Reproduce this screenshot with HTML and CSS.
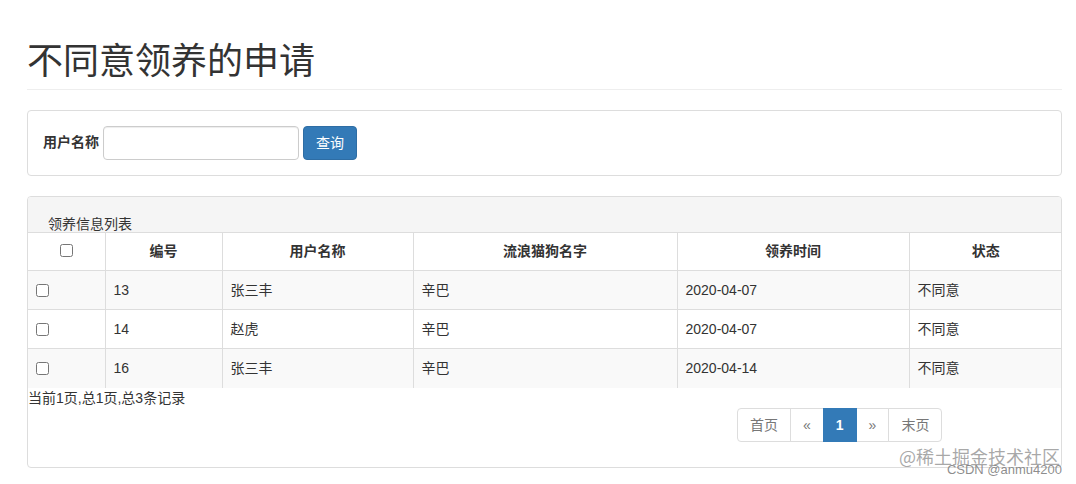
FILE: index.html
```html
<!DOCTYPE html>
<html lang="zh-CN">
<head>
<meta charset="utf-8">
<title>不同意领养的申请</title>
<link rel="stylesheet" href="styles.css">
</head>
<body>
<div class="page">
  <h1 class="page-header">不同意领养的申请</h1>

  <div class="panel">
    <div class="panel-body search">
      <label class="search-label">用户名称</label>
      <input class="search-input" type="text">
      <button class="btn-primary" type="button">查询</button>
    </div>
  </div>

  <div class="panel list-panel">
    <div class="panel-heading">领养信息列表</div>
    <table class="data-table">
      <colgroup>
        <col class="c-check"><col class="c-id"><col class="c-user"><col class="c-pet"><col class="c-time"><col class="c-state">
      </colgroup>
      <thead>
        <tr>
          <th><input class="cb" type="checkbox"></th>
          <th>编号</th>
          <th>用户名称</th>
          <th>流浪猫狗名字</th>
          <th>领养时间</th>
          <th>状态</th>
        </tr>
      </thead>
      <tbody>
        <tr class="odd">
          <td><input class="cb" type="checkbox"></td>
          <td>13</td><td>张三丰</td><td>辛巴</td><td>2020-04-07</td><td>不同意</td>
        </tr>
        <tr>
          <td><input class="cb" type="checkbox"></td>
          <td>14</td><td>赵虎</td><td>辛巴</td><td>2020-04-07</td><td>不同意</td>
        </tr>
        <tr class="odd">
          <td><input class="cb" type="checkbox"></td>
          <td>16</td><td>张三丰</td><td>辛巴</td><td>2020-04-14</td><td>不同意</td>
        </tr>
      </tbody>
    </table>
    <div class="page-info">当前1页,总1页,总3条记录</div>
    <ul class="pagination">
      <li class="disabled"><span>首页</span></li>
      <li class="disabled"><span>«</span></li>
      <li class="active"><span>1</span></li>
      <li class="disabled"><span>»</span></li>
      <li class="disabled"><span>末页</span></li>
    </ul>
  </div>

  <div class="watermark">
    <div class="wm-main">@稀土掘金技术社区</div>
    <div class="wm-sub">CSDN @anmu4200</div>
  </div>
</div>
</body>
</html>
```

FILE: styles.css
```css
* { box-sizing: border-box; }

html, body {
  margin: 0;
  padding: 0;
  background: #fff;
}

body {
  font-family: "Liberation Sans", Arial, "Noto Sans CJK SC", sans-serif;
  font-size: 14px;
  line-height: 20px;
  color: #333;
}

.page {
  position: relative;
  padding: 38px 14px 0 27px;
  height: 484px;
  overflow: hidden;
}

.page-header {
  margin: 0 0 20px;
  padding-bottom: 11px;
  font-size: 36px;
  line-height: 40px;
  font-weight: 400;
  color: #333;
  border-bottom: 1px solid #eee;
  font-family: "Noto Sans CJK SC", "Liberation Sans", sans-serif;
}

.panel {
  border: 1px solid #ddd;
  border-radius: 4px;
  background: #fff;
  margin-bottom: 20px;
  overflow: hidden;
}

.panel-body {
  padding: 15px;
}

.search {
  display: flex;
  align-items: center;
}

.search-label {
  font-weight: 700;
  margin-right: 4px;
  margin-top: -3px;
}

.search-input {
  width: 196px;
  height: 34px;
  border: 1px solid #ccc;
  border-radius: 4px;
  box-shadow: inset 0 1px 1px rgba(0,0,0,.075);
  padding: 6px 12px;
  font: inherit;
  margin: 0 4px 0 0;
}

.btn-primary {
  width: 54px;
  height: 34px;
  border: 1px solid #2e6da4;
  border-radius: 4px;
  background: #337ab7;
  color: #fff;
  font: inherit;
  font-family: "Liberation Sans", "Noto Sans CJK SC", sans-serif;
  padding: 0;
  margin: 0;
}

.panel-heading {
  background: #f5f5f5;
  height: 35px;
  padding: 19px 0 0 20px;
  line-height: 16px;
  font-size: 14px;
}

.data-table {
  width: 100%;
  border-collapse: collapse;
  table-layout: fixed;
}

.c-check { width: 77px; }
.c-id { width: 117px; }
.c-user { width: 191px; }
.c-pet { width: 264px; }
.c-time { width: 232px; }
.c-state { width: 153px; }

.data-table th,
.data-table td {
  border-top: 1px solid #ddd;
  border-left: 1px solid #ddd;
  padding: 8px;
  line-height: 22px;
  vertical-align: middle;
  text-align: left;
}

.data-table td {
  height: 39px;
}

.data-table th {
  line-height: 21px;
  text-align: center;
  font-weight: 700;
  background: #fff;
}

.data-table th:first-child,
.data-table td:first-child {
  border-left: none;
}

.data-table tr.odd td {
  background: #f9f9f9;
}

.cb {
  width: 13px;
  height: 13px;
  margin: 0;
  vertical-align: middle;
  display: block;
}

.data-table th .cb {
  margin: -2px auto 0;
}

.page-info {
  line-height: 20px;
  padding-left: 0;
}

.pagination {
  display: flex;
  list-style: none;
  margin: 0 0 25px 709px;
  padding: 0;
}

.pagination li span {
  display: block;
  padding: 6px 12px;
  line-height: 20px;
  border: 1px solid #ddd;
  margin-left: -1px;
  color: #777;
  background: #fff;
}

.pagination li:first-child span {
  margin-left: 0;
  border-radius: 4px 0 0 4px;
}

.pagination li:last-child span {
  border-radius: 0 4px 4px 0;
}

.pagination li.active span {
  background: #337ab7;
  border-color: #337ab7;
  color: #fff;
  font-weight: 700;
  position: relative;
  z-index: 1;
}

.watermark {
  position: absolute;
  right: 16px;
  top: 445px;
  text-align: right;
  pointer-events: none;
}

.wm-main {
  font-family: "Noto Sans CJK SC", sans-serif;
  font-size: 18px;
  line-height: 22px;
  color: rgba(140,140,140,.75);
  text-shadow: 0 0 1px #fff;
}

.wm-sub {
  font-family: "Liberation Sans", Arial, sans-serif;
  font-size: 13px;
  line-height: 13px;
  margin-top: -4px;
  margin-right: -2px;
  color: rgba(120,120,120,.85);
}
```
